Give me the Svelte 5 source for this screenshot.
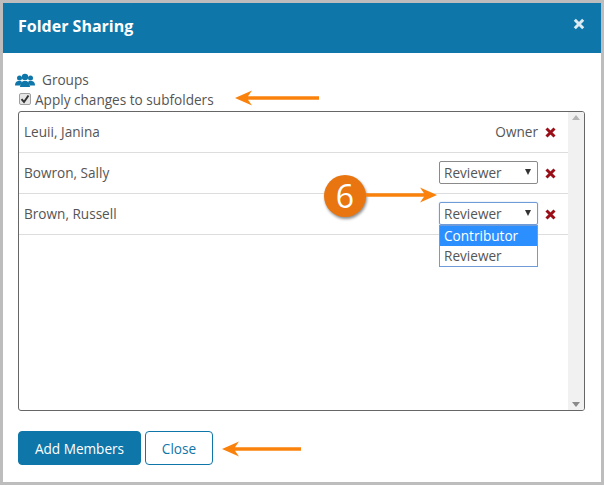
<script>
  const members = [
    { name: 'Leuii, Janina', role: 'Owner' },
    { name: 'Bowron, Sally', role: 'Reviewer' },
    { name: 'Brown, Russell', role: 'Reviewer', open: true }
  ];
</script>

{#snippet arrow(w, left)}
  <svg class="arrow" width={w} height="16" viewBox="0 0 {w} 16">
    {#if left}
      <path d="M{w} 6.200H13L17 0.500 0 8l17 7.500-4-5.700H{w}z" fill="#fa820c" />
    {:else}
      <path d="M0 6.200H{w - 13}L{w - 17} 0.500 {w} 8l-17 7.500 4-5.700H0z" fill="#fa820c" />
    {/if}
  </svg>
{/snippet}

{#snippet cross()}
  <svg class="cross" width="11" height="11" viewBox="0 0 11 11">
    <path d="M1.500 1.500l8 8M9.500 1.500l-8 8" stroke="#9a0f17" stroke-width="3" />
  </svg>
{/snippet}

<div class="frame">
  <div class="modal">
    <header>
      <h1>Folder Sharing</h1>
      <svg class="close-x" width="12" height="12" viewBox="0 0 12 12">
        <path d="M1.800 1.800l8.400 8.400M10.200 1.800l-8.400 8.400" stroke="#dcebf3" stroke-width="3" />
      </svg>
    </header>

    <div class="body">
      <div class="groups">
        <svg width="20" height="14" viewBox="0 0 20 14" fill="#0f76a9">
          <circle cx="4.500" cy="5" r="2.500" />
          <circle cx="15.500" cy="5" r="2.500" />
          <path d="M0 12.500c0-2.500 1-4 3-4.500h3l1 1-2 3.500zM20 12.500c0-2.500-1-4-3-4.500h-3l-1 1 2 3.500z" />
          <circle cx="10" cy="4" r="3.200" />
          <path d="M5 14c0-3.500 1.500-5.500 3.500-6h3c2 .5 3.500 2.500 3.500 6z" />
        </svg>
        <span>Groups</span>
      </div>

      <div class="apply">
        <label>
          <input type="checkbox" checked />
          <svg class="tick" width="12" height="12" viewBox="0 0 12 12">
            <path d="M2.500 6.200l2.500 2.800 4.500-6.500" fill="none" stroke="#333" stroke-width="2" />
          </svg>
          Apply changes to subfolders
        </label>
        <span class="apply-arrow">{@render arrow(84, true)}</span>
      </div>

      <div class="list">
        <div class="rows">
          {#each members as m}
            <div class="row">
              <span class="name">{m.name}</span>
              {#if m.role === 'Owner'}
                <span class="owner">Owner</span>
              {:else}
                <div class="select" class:focused={m.open}>
                  <span>{m.role}</span>
                  <i class="caret"></i>
                  {#if m.open}
                    <ul class="options">
                      <li class="active">Contributor</li>
                      <li>Reviewer</li>
                    </ul>
                  {/if}
                </div>
              {/if}
              {@render cross()}
            </div>
          {/each}
        </div>
        <div class="scrollbar">
          <i class="up"></i>
          <i class="down"></i>
        </div>
        <div class="callout">
          <span class="badge">6</span>
          <span class="callout-arrow">{@render arrow(71, false)}</span>
        </div>
      </div>

      <div class="actions">
        <button class="primary">Add Members</button>
        <button class="secondary">Close</button>
        <span class="close-arrow">{@render arrow(79, true)}</span>
      </div>
    </div>
  </div>
</div>

<style>
  :global(body) {
    margin: 0;
  }

  .frame {
    width: 604px;
    height: 485px;
    box-sizing: border-box;
    background: #bdbdbd;
    padding: 3px;
    font-family: "Open Sans", sans-serif;
    font-size: 13.6px;
    color: #555;
  }

  .modal {
    height: 479px;
    width: 598px;
    background: #fff;
  }

  header {
    height: 50px;
    background: #0f76a9;
    display: flex;
    align-items: center;
    justify-content: space-between;
    padding: 0 16px 0 15px;
    box-sizing: border-box;
  }

  h1 {
    margin: 0;
    color: #fff;
    font-size: 16px;
    font-weight: 700;
    position: relative;
    top: -2px;
  }

  .close-x {
    position: relative;
    top: -4px;
  }

  .body {
    padding: 17px 16px 0 15px;
  }

  .groups {
    display: flex;
    align-items: center;
    gap: 7px;
    height: 19px;
    line-height: 19px;
    margin-left: -3px;
  }

  .apply {
    display: flex;
    align-items: center;
    height: 20px;
    padding-left: 1px;
  }

  .apply label {
    position: relative;
    display: flex;
    align-items: center;
    gap: 4px;
  }

  .apply input {
    appearance: none;
    width: 12px;
    height: 12px;
    box-sizing: border-box;
    margin: 0;
    background: #e6e6e6;
    border: 1px solid #a0a0a0;
    border-radius: 2px;
  }

  /* tick sits on the custom checkbox */
  .tick {
    position: absolute;
    left: 0;
    top: 50%;
    margin-top: -6px;
  }

  .apply-arrow {
    display: flex;
    margin-left: 21px;
    margin-top: -2px;
  }

  .arrow {
    display: block;
    flex: none;
  }

  .list {
    position: relative;
    display: flex;
    height: 300px;
    box-sizing: border-box;
    border: 1px solid #666;
    border-radius: 3px;
    margin-top: 2px;
  }

  .rows {
    flex: 1;
  }

  .row {
    height: 41px;
    box-sizing: border-box;
    border-bottom: 1px solid #ddd;
    display: flex;
    align-items: center;
    padding: 0 12px 2px 5px;
  }

  .name {
    flex: 1;
  }

  .owner {
    margin-right: 7px;
  }

  .cross {
    flex: none;
    margin-top: 2px;
  }

  .select {
    position: relative;
    width: 99px;
    height: 23px;
    box-sizing: border-box;
    border: 1px solid #8a8a8a;
    border-radius: 2px;
    display: flex;
    align-items: center;
    justify-content: space-between;
    padding: 0 6px 0 4px;
    margin-right: 7px;
  }

  .select.focused {
    border-color: #6f9bd8;
    box-shadow: 0 0 1px #6f9bd8;
  }

  .caret {
    width: 0;
    height: 0;
    border: 3.500px solid transparent;
    border-top: 6px solid #333;
    border-bottom: 0;
  }

  .options {
    position: absolute;
    z-index: 2;
    top: 22px;
    left: -1px;
    width: 99px;
    box-sizing: border-box;
    margin: 0;
    padding: 0;
    list-style: none;
    background: #fff;
    border: 1px solid #6f9bd8;
  }

  .options li {
    height: 20px;
    line-height: 20px;
    padding-left: 4px;
  }

  .options li.active {
    background: #2b8fff;
    color: #fff;
  }

  .scrollbar {
    position: relative;
    width: 16px;
    background: #f1f1f1;
    border-radius: 0 2px 2px 0;
  }

  .up,
  .down {
    position: absolute;
    left: 4px;
    width: 0;
    height: 0;
    border: 4px solid transparent;
  }

  .up {
    top: 3px;
    border-top: 0;
    border-bottom: 5px solid #b5b5b5;
  }

  .down {
    bottom: 3px;
    border-bottom: 0;
    border-top: 5px solid #8a8a8a;
  }

  /* annotation on top of the list */
  .callout {
    position: absolute;
    left: 305px;
    top: 63px;
    display: flex;
    align-items: center;
    z-index: 3;
  }

  .callout-arrow {
    margin-top: -3px;
  }

  .badge {
    width: 42px;
    height: 42px;
    flex: none;
    border-radius: 50%;
    background: #e8750f;
    color: #fff;
    font-size: 32px;
    font-weight: 400;
    line-height: 41px;
    text-align: center;
    box-shadow: 1px 2px 3px rgba(0, 0, 0, 0.45);
  }

  .actions {
    display: flex;
    align-items: center;
    gap: 4px;
    margin-top: 20px;
  }

  .actions button {
    height: 34px;
    box-sizing: border-box;
    border-radius: 4px;
    font: inherit;
    padding: 0;
  }

  .primary {
    width: 123px;
    background: #0f76a9;
    border: 1px solid #0f76a9;
    color: #fff;
  }

  .secondary {
    width: 68px;
    background: #fff;
    border: 1px solid #0f76a9;
    color: #0f76a9;
  }

  .close-arrow {
    display: flex;
    margin-left: 5px;
    margin-top: 2px;
  }
</style>
